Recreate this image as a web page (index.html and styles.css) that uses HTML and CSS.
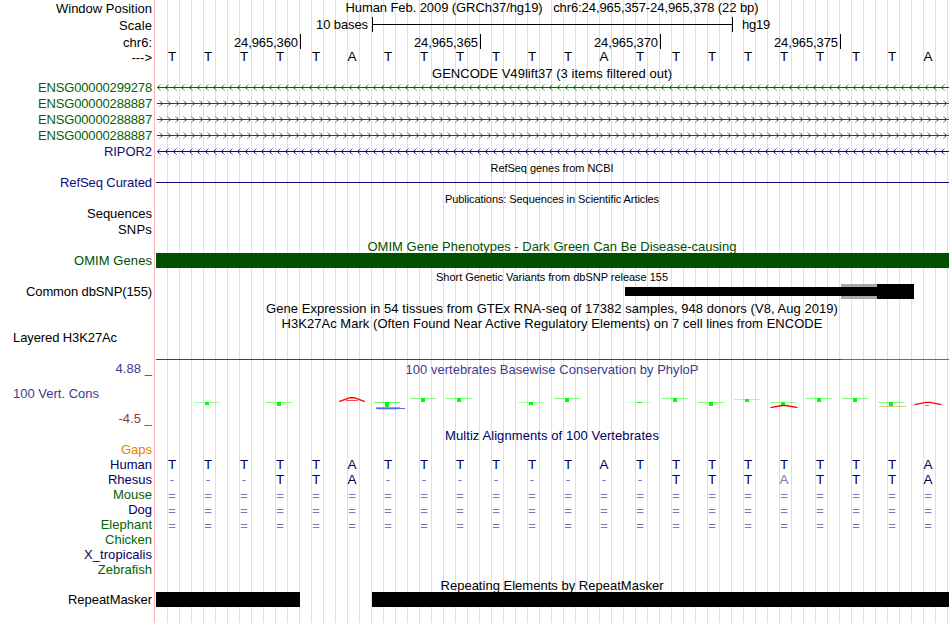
FILE: index.html
```html
<!DOCTYPE html>
<html lang="en">
<head>
<meta charset="utf-8">
<title>chr6:24,965,357-24,965,378</title>
<link rel="stylesheet" href="styles.css">
</head>
<body>
<main class="browser">
  <div class="row position"><div class="label"><span data-w="96">Window Position</span></div><div class="plot title"><span data-w="413">Human Feb. 2009 (GRCh37/hg19) &nbsp; chr6:24,965,357-24,965,378 (22 bp)</span></div></div>
  <div class="row scale"><div class="label"><span data-w="33">Scale</span></div><div class="plot scale-bar"><span class="scale-size" data-w="52">10 bases</span><i class="ruler"></i><span data-w="28">hg19</span></div></div>
  <div class="row chrom"><div class="label"><span>chr6:</span></div><div class="plot ticks"><span class="tick first"><b data-w="64">24,965,360</b></span><span class="tick"><b data-w="64">24,965,365</b></span><span class="tick"><b data-w="64">24,965,370</b></span><span class="tick"><b data-w="64">24,965,375</b></span></div></div>
  <div class="row sequence"><div class="label"><span>---&gt;</span></div><div class="plot bases" data-seq="TTTTTATTTTTTATTTTTTTTA"></div></div>

  <div class="row heading gencode"><div class="label"></div><div class="plot title"><span data-w="240">GENCODE V49lift37 (3 items filtered out)</span></div></div>
  <div class="row gene green"><div class="label"><span data-w="114">ENSG00000299278</span></div><div class="plot" data-strand="left"></div></div>
  <div class="row gene green"><div class="label"><span data-w="114">ENSG00000288887</span></div><div class="plot" data-strand="right"></div></div>
  <div class="row gene green"><div class="label"><span data-w="114">ENSG00000288887</span></div><div class="plot" data-strand="right"></div></div>
  <div class="row gene green"><div class="label"><span data-w="114">ENSG00000288887</span></div><div class="plot" data-strand="right"></div></div>
  <div class="row gene blue"><div class="label"><span data-w="48">RIPOR2</span></div><div class="plot" data-strand="left"></div></div>

  <div class="row heading small"><div class="label"></div><div class="plot title"><span data-w="123">RefSeq genes from NCBI</span></div></div>
  <div class="row gene blue"><div class="label"><span data-w="92">RefSeq Curated</span></div><div class="plot"><i class="intron"></i></div></div>
  <div class="row heading small"><div class="label"></div><div class="plot title"><span data-w="214">Publications: Sequences in Scientific Articles</span></div></div>
  <div class="row item"><div class="label"><span data-w="65">Sequences</span></div><div class="plot"></div></div>
  <div class="row item"><div class="label"><span data-w="34">SNPs</span></div><div class="plot"></div></div>

  <div class="row heading omim-title"><div class="label"></div><div class="plot title"><span data-w="369">OMIM Gene Phenotypes - Dark Green Can Be Disease-causing</span></div></div>
  <div class="row omim"><div class="label"><span data-w="78">OMIM Genes</span></div><div class="plot"><i class="block"></i></div></div>
  <div class="row heading small tall"><div class="label"></div><div class="plot title"><span data-w="232">Short Genetic Variants from dbSNP release 155</span></div></div>
  <div class="row item"><div class="label"><span data-w="126">Common dbSNP(155)</span></div><div class="plot snp"><i class="thin"></i><i class="uncertain"></i><i class="thick"></i></div></div>
  <div class="row heading gtex"><div class="label"></div><div class="plot title"><span data-w="572">Gene Expression in 54 tissues from GTEx RNA-seq of 17382 samples, 948 donors (V8, Aug 2019)</span></div></div>
  <div class="row heading h3k"><div class="label"></div><div class="plot title"><span data-w="541">H3K27Ac Mark (Often Found Near Active Regulatory Elements) on 7 cell lines from ENCODE</span></div></div>
  <div class="row layered"><div class="label wide"><span data-w="104">Layered H3K27Ac</span></div><div class="plot signal"><i class="red"></i><i class="gray"></i></div></div>

  <div class="row phylop">
    <div class="label scale-labels"><span class="max" data-w="36.500">4.88 _</span><span class="name" data-w="86">100 Vert. Cons</span><span class="min" data-w="33.500">-4.5 _</span></div>
    <div class="plot"><div class="title"><span data-w="293">100 vertebrates Basewise Conservation by PhyloP</span></div><svg class="logo" width="793" height="30" viewBox="156 388 793 30"></svg></div>
  </div>

  <div class="row heading multiz"><div class="label"></div><div class="plot title"><span data-w="214">Multiz Alignments of 100 Vertebrates</span></div></div>
  <div class="row species gaps"><div class="label"><span>Gaps</span></div><div class="plot"></div></div>
  <div class="row species navy"><div class="label"><span>Human</span></div><div class="plot bases" data-seq="TTTTTATTTTTTATTTTTTTTA"></div></div>
  <div class="row species navy"><div class="label"><span>Rhesus</span></div><div class="plot bases" data-seq="---TTA--------TTTaTTTA"></div></div>
  <div class="row species forest"><div class="label"><span>Mouse</span></div><div class="plot bases unaligned" data-seq="======================"></div></div>
  <div class="row species navy"><div class="label"><span>Dog</span></div><div class="plot bases unaligned" data-seq="======================"></div></div>
  <div class="row species forest"><div class="label"><span>Elephant</span></div><div class="plot bases unaligned" data-seq="======================"></div></div>
  <div class="row species forest"><div class="label"><span>Chicken</span></div><div class="plot"></div></div>
  <div class="row species navy"><div class="label"><span data-w="68">X_tropicalis</span></div><div class="plot"></div></div>
  <div class="row species forest"><div class="label"><span>Zebrafish</span></div><div class="plot"></div></div>

  <div class="row heading repeat-title"><div class="label"></div><div class="plot title"><span data-w="223">Repeating Elements by RepeatMasker</span></div></div>
  <div class="row repeat"><div class="label"><span data-w="84">RepeatMasker</span></div><div class="plot repeats"><i class="first"></i><i class="second"></i></div></div>
</main>
<script src="tracks.js"></script>
</body>
</html>
```
FILE: styles.css
```css
* { box-sizing: border-box; }
body { margin: 0; background: #fff; color: #000; font: 13px/15px "Liberation Sans", Arial, sans-serif; overflow: hidden; }
i { display: block; font-style: normal; }
b { font-weight: normal; }
.browser {
  width: 950px; height: 623px;
  background:
    linear-gradient(#ffb4b4, #ffb4b4) 154px 0 / 1px 100% no-repeat,
    repeating-linear-gradient(90deg, #dcdcf8 0 1px, transparent 1px 12px) 167px 0 / 783px 100% no-repeat;
}
.row { display: grid; grid-template-columns: 156px 793px; height: 16px; white-space: nowrap; }
.label { padding-right: 4px; text-align: right; }
.plot { min-width: 0; }
.title { padding-right: 1px; text-align: center; }

.position { height: 17px; }
.position .label { padding-top: 1px; }
.scale { height: 17px; }
.scale .label { padding-top: 1px; }
.scale-bar { display: flex; }
.scale-size { width: 212px; text-align: right; }
.ruler {
  width: 361px; height: 15px; margin: 0 9px 0 4px;
  border: solid #000; border-width: 0 1px;
  background: linear-gradient(#000, #000) 0 7px / 100% 1px no-repeat;
}
.chrom { height: 15px; }
.chrom .label { padding-top: 1px; }
.ticks { display: flex; }
.tick { width: 180px; height: 15px; padding: 1px 2px 0 0; border-right: 1px solid #000; text-align: right; }
.tick.first { width: 145px; }
.sequence { height: 17px; }
.sequence .label { padding-top: 1px; }
.bases { display: flex; margin-left: -2px; font-size: 13.500px; }
.bases span { flex: 0 0 36px; text-align: center; }
.unaligned { padding-top: 1px; font-size: 13px; }

.heading { height: 15px; }
.gencode { height: 14px; }
.small { font-size: 11px; line-height: 12px; }
.small .title { padding-top: 2px; }
.small.tall { height: 16px; }
.small.tall .title { padding-top: 3px; }
.green { color: #006400; }
.blue { color: #0c0c78; }
.gene svg { display: block; margin-top: 4px; fill: currentColor; }
.intron { height: 1px; margin-top: 7px; background: #0c0c78; }

.omim-title { color: #005000; }
.omim-title .title { padding-top: 1px; }
.omim { height: 15px; color: #005000; }
.block { height: 15px; background: #005000; }
.snp { display: flex; align-items: center; height: 15px; padding-left: 469px; }
.thin { width: 216px; height: 9px; background: #000; }
.uncertain { width: 36px; height: 15px; background: linear-gradient(#a8a8a8 3px, #000 3px 12px, #a8a8a8 12px); }
.thick { width: 37px; height: 15px; background: #000; }
.gtex { height: 16px; padding-top: 1px; }
.h3k { height: 14px; }
.layered { height: 30px; }
.label.wide { padding-left: 13px; text-align: left; }
.signal { display: flex; padding-top: 29px; }
.signal i { height: 1px; }
.signal .red { width: 685px; background: #782828; }
.signal .gray { width: 108px; background: #6e6e5a; }

.phylop { height: 68px; padding-top: 1px; color: #3c3c8c; }
.scale-labels { display: flex; flex-direction: column; gap: 10px; align-items: flex-end; }
.scale-labels .name { align-self: flex-start; margin-left: 13px; }
.scale-labels .min { color: #8c3c3c; }
.phylop .title { padding-top: 1px; }
.logo { display: block; margin-top: 11px; }

.multiz { height: 14px; color: #000064; }
.species { height: 15px; }
.navy, .species .bases { color: #000064; }
.forest { color: #006400; }
.gaps { color: #e68200; }
.bases .faint { color: #7878b4; }
.repeat-title { padding-top: 1px; }
.repeat { height: 15px; }
.repeats { display: flex; gap: 72px; }
.repeats i { height: 15px; background: #000; }
.repeats .first { width: 144px; }
.repeats .second { width: 577px; }
```
FILE: tracks.js
```js
// Sequence rows: one 36px cell per base.
document.querySelectorAll('.bases').forEach(row => {
  for (const ch of row.dataset.seq) {
    const cell = document.createElement('span');
    cell.textContent = ch.toUpperCase();
    if ('-=a'.includes(ch)) cell.className = 'faint';
    row.appendChild(cell);
  }
});

// Gene rows: intron line with strand chevrons.
document.querySelectorAll('[data-strand]').forEach(plot => {
  const pixels = plot.dataset.strand === 'left'
    ? [[1, 3, 1], [2, 2, 1], [2, 4, 1], [3, 1, .7], [3, 5, .7], [4, 0, .4], [4, 6, .4]]
    : [[6, 3, 1], [5, 2, 1], [5, 4, 1], [4, 1, .7], [4, 5, .7], [3, 0, .4], [3, 6, .4]];
  let s = '<svg width="793" height="7"><rect x="1" y="3" width="792" height="1"/>';
  for (let x = 0; x < 793; x += 8)
    for (const [dx, y, o] of pixels) s += `<rect x="${x + dx}" y="${y}" width="1" height="1" opacity="${o}"/>`;
  plot.innerHTML = s + '</svg>';
});

// Conservation logo: T glyphs as [x, y, stem height, bar opacity].
const marks = [
  [194, 402, 2, .35], [266, 402, 3, .5], [374, 402, 4, .6], [410, 398, 3, .5], [446, 398, 3, .5],
  [518, 402, 2, .35], [554, 398, 3, .5], [662, 398, 3, .5], [698, 402, 3, .5], [734, 399, 2, .35],
  [770, 402, 2, .4], [806, 398, 3, .5], [842, 398, 3, .5], [878, 402, 3, .5]
];
let logo = '';
for (const [x, y, h, o] of marks)
  logo += `<rect x="${x}" y="${y}" width="26" height="1" fill="#0f0" opacity="${o}"/><rect x="${x + 11}" y="${y}" width="4" height="${h + 1}" fill="#0f0"/>`;
logo += '<path d="M626 402.5h26" stroke="#0f0" opacity=".2"/><path d="M637 402.5h5" stroke="#0f0"/>';
logo += '<g fill="none" stroke="#f00" stroke-width="1.4"><path d="M339 401.6L350 397.7h4L365 401.6"/><path d="M346 400.5h12" stroke-width=".7"/>';
logo += '<path d="M770.5 407.6L782 405.5h4L797.5 407.6"/><path d="M914.5 404.6L926 402.4h4L941.5 404.6"/></g>';
logo += '<path d="M376 407.5h24" stroke="#f00" opacity=".5"/><path d="M376 408.5h29" stroke="#66f"/><path d="M378 409.5h20" stroke="#66f" opacity=".3"/>';
logo += '<path d="M879 406.5h27" stroke="#b4aa32" opacity=".6"/><path d="M925 405.5h4" stroke="#0f0"/>';
document.querySelector('.logo').innerHTML = logo;

// Set each label to its tabulated width by spreading the difference over its letters.
document.querySelectorAll('[data-w]').forEach(el => {
  const range = document.createRange();
  range.selectNodeContents(el);
  const natural = range.getBoundingClientRect().width;
  el.style.letterSpacing = (el.dataset.w - natural) / el.textContent.length + 'px';
});
```
